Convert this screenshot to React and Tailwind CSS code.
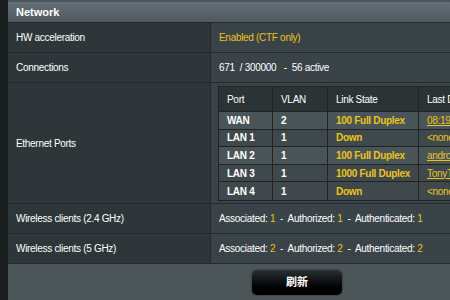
export default function App() {
  const ports = [
    ["WAN", "2", "100 Full Duplex", "08:19:A6:3C:11:20", true, "bg-[#4a5558]"],
    ["LAN 1", "1", "Down", "<none>", false, "bg-[#3f494c]"],
    ["LAN 2", "1", "100 Full Duplex", "android-1a2b3c4d", true, "bg-[#4a5558]"],
    ["LAN 3", "1", "1000 Full Duplex", "TonyT-PC", true, "bg-[#3f494c]"],
    ["LAN 4", "1", "Down", "<none>", false, "bg-[#3f494c]"],
  ];
  const label = "w-[202px] shrink-0 bg-[#2e3639] pl-2 flex items-center text-white whitespace-nowrap";
  const value = "flex-1 bg-[#3a4347] pl-2 flex items-center text-white border-l border-[#24292b] whitespace-pre";
  const y = "text-[#ecc41c]";
  return (
    <div className="w-[450px] h-[300px] bg-[#1b1e1f] flex overflow-hidden tracking-[-0.3px]" style={{ fontFamily: '"Liberation Sans", Arial, sans-serif' }}>
      <div className="w-[8px] shrink-0 bg-[#1b1e1f]" />
      <div className="flex-1 min-w-0 bg-[#4c5558] pt-[2px] flex flex-col text-[10px]">
        <div className="h-[21px] bg-gradient-to-b from-[#66707a] to-[#4f585c] flex items-center pl-2 text-white font-bold text-[11px] tracking-normal border-b border-[#24292b]">
          Network
        </div>
        <div className="flex h-[30px] border-b border-[#24292b]">
          <div className={label}>HW acceleration</div>
          <div className={value}><span className={y}>Enabled (CTF only)</span></div>
        </div>
        <div className="flex h-[30px] border-b border-[#24292b]">
          <div className={label}>Connections</div>
          <div className={value}>{"671  / 300000   -  56 active"}</div>
        </div>
        <div className="flex h-[121px] border-b border-[#24292b]">
          <div className={label}>Ethernet Ports</div>
          <div className="flex-1 min-w-0 bg-[#3a4347] border-l border-[#24292b] pl-[7px] pt-[3px] overflow-hidden">
            <div className="w-[300px] border border-[#202426] border-r-0">
              <div className="flex h-[25px] bg-[#2c3335] text-white border-b border-[#202426]">
                <div className="w-[54px] shrink-0 pl-2 flex items-center border-r border-[#202426]">Port</div>
                <div className="w-[55px] shrink-0 pl-2 flex items-center border-r border-[#202426]">VLAN</div>
                <div className="w-[91px] shrink-0 pl-2 flex items-center border-r border-[#202426]">Link State</div>
                <div className="flex-1 pl-2 flex items-center whitespace-nowrap">Last Device</div>
              </div>
              {ports.map(([p, v, s, d, on, bg], i) => (
                <div key={i} className={"flex h-[17.6px] border-b border-[#202426] last:border-b-0 font-semibold " + bg}>
                  <div className="w-[54px] shrink-0 pl-2 flex items-center border-r border-[#202426] text-white">{p}</div>
                  <div className="w-[55px] shrink-0 pl-2 flex items-center border-r border-[#202426] text-white">{v}</div>
                  <div className={"w-[91px] shrink-0 pl-2 flex items-center border-r border-[#202426] whitespace-nowrap " + y}>{s}</div>
                  <div className={"flex-1 pl-2 flex items-center whitespace-nowrap font-normal " + y + (on ? " underline" : "")}>{d}</div>
                </div>
              ))}
            </div>
          </div>
        </div>
        <div className="flex h-[30px] border-b border-[#24292b]">
          <div className={label}>Wireless clients (2.4 GHz)</div>
          <div className={value}>
            Associated: <span className={y}>1</span>{"  -  "}Authorized: <span className={y}>1</span>{"  -  "}Authenticated: <span className={y}>1</span>
          </div>
        </div>
        <div className="flex h-[30px] border-b border-[#24292b]">
          <div className={label}>Wireless clients (5 GHz)</div>
          <div className={value}>
            Associated: <span className={y}>2</span>{"  -  "}Authorized: <span className={y}>2</span>{"  -  "}Authenticated: <span className={y}>2</span>
          </div>
        </div>
        <div className="flex justify-start pl-[244px] pt-[6px]">
          <button className="w-[90px] h-[25px] rounded-[5px] bg-gradient-to-b from-[#2a3033] via-[#0c0e0f] to-[#000000] text-white font-bold text-[11px] tracking-normal shadow-[0_0_2px_#222]" style={{ fontFamily: '"Liberation Sans", "Noto Sans CJK SC", sans-serif' }}>
            刷新
          </button>
        </div>
      </div>
    </div>
  );
}
